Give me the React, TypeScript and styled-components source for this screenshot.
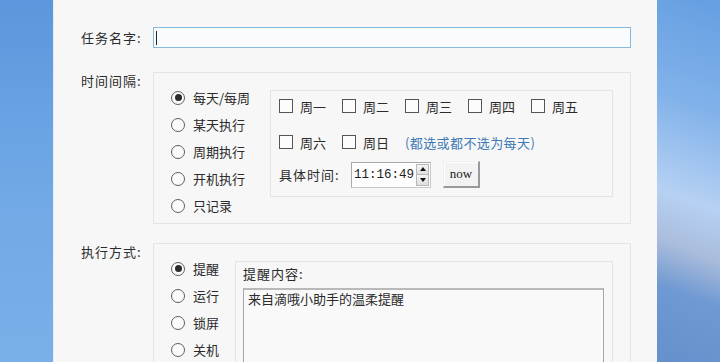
import React from "react";
import styled, { createGlobalStyle, css } from "styled-components";

const Global = createGlobalStyle`
  html, body { margin: 0; padding: 0; overflow: hidden; }
  body {
    width: 720px; height: 362px;
    font-family: "Noto Sans CJK SC", "Noto Sans", sans-serif;
    font-size: 13px; color: #2b2b2b;
  }
`;

const Screen = styled.div`
  display: flex;
  width: 720px;
  height: 362px;
  overflow: hidden;
`;

const LeftDesk = styled.div`
  width: 53px;
  flex: none;
  background: linear-gradient(180deg, #5c96dc 0%, #68a2e3 30%, #73aae6 60%, #79b0e8 100%);
`;

const RightDesk = styled.div`
  flex: 1;
  background: linear-gradient(200deg, #659fe1 0%, #82b2ea 30%, #b6d1f3 55%, #aabcdc 68%, #6e99d2 80%, #6590cb 100%);
`;

const Panel = styled.div`
  width: 604px;
  flex: none;
  background: #f7f7f7;
  box-shadow: inset 1px 0 0 #e9edf2;
  padding: 27px 26px 0 28px;
  box-sizing: border-box;
  display: flex;
  flex-direction: column;
`;

const FormRow = styled.div<{ $top?: boolean; $mt?: number }>`
  display: flex;
  align-items: ${(p) => (p.$top ? "flex-start" : "center")};
  margin-top: ${(p) => p.$mt ?? 0}px;
`;

const FieldLabel = styled.div`
  width: 72px;
  flex: none;
  line-height: 18px;
  letter-spacing: 1px;
  white-space: nowrap;
`;

const NameField = styled.div`
  flex: 1;
  height: 21px;
  box-sizing: border-box;
  border: 1px solid #86b9de;
  background: #f9fbfc;
  display: flex;
  align-items: center;
  padding-left: 2px;
`;

const Caret = styled.span`
  width: 1px;
  height: 14px;
  background: #222;
`;

const Group = styled.div<{ $pad: string }>`
  flex: 1;
  display: flex;
  align-items: flex-start;
  border: 1px solid #e4e4e4;
  padding: ${(p) => p.$pad};
  box-sizing: border-box;
`;

const RadioCol = styled.div<{ $w: number }>`
  width: ${(p) => p.$w}px;
  flex: none;
  display: flex;
  flex-direction: column;
`;

const RadioRow = styled.div`
  height: 27px;
  display: flex;
  align-items: center;
  gap: 8px;
  white-space: nowrap;
`;

const RadioDot = styled.span<{ $checked?: boolean }>`
  width: 14px;
  height: 14px;
  box-sizing: border-box;
  border-radius: 50%;
  border: 1.3px solid #5e5e5e;
  background: #fbfbfb;
  display: flex;
  align-items: center;
  justify-content: center;
  flex: none;
  ${(p) =>
    p.$checked &&
    css`
      &::after {
        content: "";
        width: 7px;
        height: 7px;
        border-radius: 50%;
        background: #2a2a2a;
      }
    `}
`;

const InnerBox = styled.div<{ $pad: string }>`
  flex: 1;
  margin-top: 6px;
  border: 1px solid #e4e4e4;
  padding: ${(p) => p.$pad};
  box-sizing: border-box;
  display: flex;
  flex-direction: column;
`;

const CheckRow = styled.div<{ $mt: number }>`
  height: 24px;
  margin-top: ${(p) => p.$mt}px;
  display: flex;
  align-items: center;
`;

const CheckItem = styled.div`
  width: 63px;
  flex: none;
  display: flex;
  align-items: center;
  gap: 7px;
  white-space: nowrap;
`;

const CheckBox = styled.span`
  width: 14px;
  height: 14px;
  box-sizing: border-box;
  border: 1px solid #555;
  background: #fcfcfc;
  flex: none;
`;

const Hint = styled.span`
  color: #3c79b6;
  letter-spacing: 0.4px;
  white-space: nowrap;
`;

const TimeRow = styled.div`
  margin-top: 7px;
  height: 27px;
  display: flex;
  align-items: center;
`;

const TimeLabel = styled.span`
  width: 72px;
  flex: none;
  letter-spacing: 1px;
  white-space: nowrap;
`;

const SpinBox = styled.div`
  width: 80px;
  height: 26px;
  box-sizing: border-box;
  border: 1px solid #a9a9a9;
  border-right-color: #c9c9c9;
  border-bottom-color: #c9c9c9;
  background: #fdfdfd;
  display: flex;
  align-items: center;
  padding: 0 1px 0 2px;
`;

const SpinText = styled.span`
  flex: 1;
  font-family: "Liberation Mono", "DejaVu Sans Mono", monospace;
  font-size: 12.5px;
  color: #1e1e1e;
`;

const SpinArrows = styled.div`
  width: 13px;
  height: 22px;
  display: flex;
  flex-direction: column;
  border: 1px solid #b8b8b8;
  box-sizing: border-box;
`;

const SpinBtn = styled.div<{ $down?: boolean }>`
  flex: 1;
  background: linear-gradient(#f4f4f4, #dedede);
  display: flex;
  align-items: center;
  justify-content: center;
  ${(p) => p.$down && css`border-top: 1px solid #b8b8b8;`}
  &::after {
    content: "";
    width: 0;
    height: 0;
    border-left: 3.5px solid transparent;
    border-right: 3.5px solid transparent;
    ${(p) =>
      p.$down
        ? css`border-top: 4px solid #111;`
        : css`border-bottom: 4px solid #111;`}
  }
`;

const NowButton = styled.div`
  margin-left: 12px;
  width: 37px;
  height: 27px;
  box-sizing: border-box;
  border: 1px solid #f0f0f0;
  border-right: 2px solid #9a9a9a;
  border-bottom: 2px solid #9a9a9a;
  background: #f3f3f3;
  box-shadow: inset 1px 1px 0 #ffffff;
  display: flex;
  align-items: center;
  justify-content: center;
  font-family: "Liberation Serif", "DejaVu Serif", serif;
  font-size: 13px;
  color: #222;
`;

const ContentLabel = styled.div`
  line-height: 20px;
  letter-spacing: 1px;
  white-space: nowrap;
`;

const TextArea = styled.div`
  margin-top: 4px;
  height: 110px;
  box-sizing: border-box;
  border: 1px solid #a5a5a5;
  border-top: 2px solid #b9b9b9;
  background: #f9f9f9;
  padding: 0 4px;
  line-height: 18px;
  color: #2b2b2b;
`;

const days1 = ["周一", "周二", "周三", "周四", "周五"];
const days2 = ["周六", "周日"];
const intervals = ["每天/每周", "某天执行", "周期执行", "开机执行", "只记录"];
const actions = ["提醒", "运行", "锁屏", "关机"];

export default function App() {
  return (
    <>
      <Global />
      <Screen>
        <LeftDesk />
        <Panel>
          <FormRow>
            <FieldLabel>任务名字:</FieldLabel>
            <NameField>
              <Caret />
            </NameField>
          </FormRow>

          <FormRow $top $mt={24}>
            <FieldLabel>时间间隔:</FieldLabel>
            <Group $pad="11px 17px 4px 17px">
              <RadioCol $w={99}>
                {intervals.map((t, i) => (
                  <RadioRow key={t}>
                    <RadioDot $checked={i === 0} />
                    {t}
                  </RadioRow>
                ))}
              </RadioCol>
              <InnerBox $pad="0 8px 8px 8px">
                <CheckRow $mt={3}>
                  {days1.map((d) => (
                    <CheckItem key={d}>
                      <CheckBox />
                      {d}
                    </CheckItem>
                  ))}
                </CheckRow>
                <CheckRow $mt={12}>
                  {days2.map((d) => (
                    <CheckItem key={d}>
                      <CheckBox />
                      {d}
                    </CheckItem>
                  ))}
                  <Hint>(都选或都不选为每天)</Hint>
                </CheckRow>
                <TimeRow>
                  <TimeLabel>具体时间:</TimeLabel>
                  <SpinBox>
                    <SpinText>11:16:49</SpinText>
                    <SpinArrows>
                      <SpinBtn />
                      <SpinBtn $down />
                    </SpinArrows>
                  </SpinBox>
                  <NowButton>now</NowButton>
                </TimeRow>
              </InnerBox>
            </Group>
          </FormRow>

          <FormRow $top $mt={19}>
            <FieldLabel>执行方式:</FieldLabel>
            <Group $pad="11px 17px 4px 17px">
              <RadioCol $w={64}>
                {actions.map((t, i) => (
                  <RadioRow key={t}>
                    <RadioDot $checked={i === 0} />
                    {t}
                  </RadioRow>
                ))}
              </RadioCol>
              <InnerBox $pad="2px 8px 8px 7px">
                <ContentLabel>提醒内容:</ContentLabel>
                <TextArea>来自滴哦小助手的温柔提醒</TextArea>
              </InnerBox>
            </Group>
          </FormRow>
        </Panel>
        <RightDesk />
      </Screen>
    </>
  );
}
